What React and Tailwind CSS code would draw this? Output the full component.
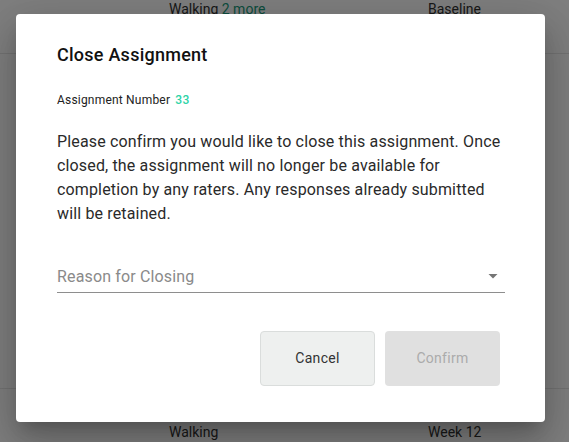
import React from "react";

function BgRow({ left, right, className = "" }) {
  return (
    <div className={"flex text-[14px] leading-[20px] text-[#333] " + className}>
      <div className="w-[169px]" />
      <div className="w-[259px]">{left}</div>
      <div>{right}</div>
    </div>
  );
}

export default function App() {
  return (
    <div
      className="relative w-[569px] h-[442px] overflow-hidden bg-white"
      style={{ fontFamily: "Roboto, 'Liberation Sans', sans-serif" }}
    >
      {/* background page */}
      <div className="flex flex-col">
        <BgRow
          className="-mt-[1px] h-[55px] border-b border-[#e6e6e6]"
          left={
            <span>
              Walking <span className="text-[#1a9c7c]">2 more</span>
            </span>
          }
          right="Baseline"
        />
        <div className="h-[335px] border-b border-[#e6e6e6]" />
        <BgRow className="pt-[33px]" left="Walking" right="Week 12" />
      </div>

      {/* overlay */}
      <div className="absolute inset-0 bg-black/50" />

      {/* dialog */}
      <div className="absolute left-[16px] top-[14px] w-[529px] h-[408px] rounded bg-white shadow-[0_11px_15px_-7px_rgba(0,0,0,0.2),0_24px_38px_3px_rgba(0,0,0,0.14),0_9px_46px_8px_rgba(0,0,0,0.12)] pl-[41px] pr-[40px] pt-[27px] flex flex-col">
        <h2 className="text-[18px] leading-[28px] font-medium tracking-[0.25px] text-[#111]">
          Close Assignment
        </h2>
        <div className="mt-[23px] text-[12px] leading-[16px] tracking-[0.2px] text-[#222]">
          Assignment Number <span className="ml-[2px] font-medium text-[#2bd3a6]">33</span>
        </div>
        <p className="mt-[22px] text-[16px] leading-[24px] tracking-[0.15px] text-[#2a2a2a]">
          Please confirm you would like to close this assignment. Once closed, the
          assignment will no longer be available for completion by any raters. Any
          responses already submitted will be retained.
        </p>
        <div className="mt-[39px] flex items-center justify-between border-b border-[#8e8e8e] pb-[3px]">
          <span className="text-[16px] leading-[24px] tracking-[0.15px] text-[#8a8a8a]">Reason for Closing</span>
          <svg width="24" height="24" viewBox="0 0 24 24" className="mr-[0px] -mt-[2px]">
            <path d="M7.5 10l4.5 4.5 4.5-4.5z" fill="#757575" />
          </svg>
        </div>
        <div className="mt-[38px] mr-[5px] flex justify-end gap-[10px]">
          <button className="w-[115px] h-[55px] rounded bg-[#eef0ef] border border-[#dadddc] text-[14px] tracking-[0.3px] text-[#333]">
            Cancel
          </button>
          <button className="w-[115px] h-[55px] rounded bg-[#e0e0e0] text-[14px] tracking-[0.3px] text-[#ababab]">
            Confirm
          </button>
        </div>
      </div>
    </div>
  );
}
